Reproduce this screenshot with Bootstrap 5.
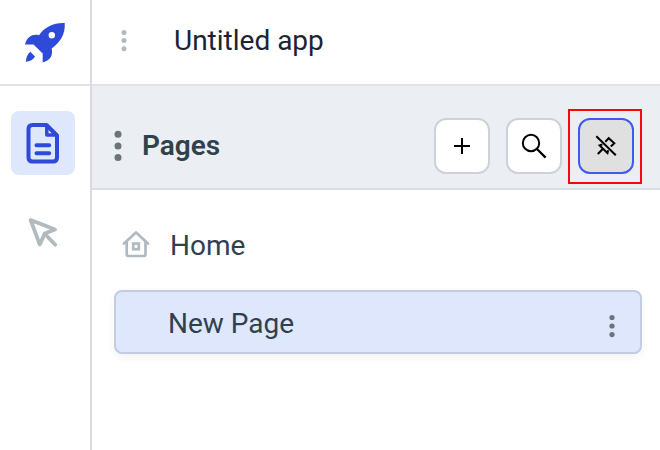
<!DOCTYPE html>
<html lang="en">
<head>
<meta charset="utf-8">
<meta name="viewport" content="width=device-width, initial-scale=1">
<title>Untitled app</title>
<link href="https://cdn.jsdelivr.net/npm/bootstrap@5.3.0/dist/css/bootstrap.min.css" rel="stylesheet">
<style>
body{font-family:Roboto,"Liberation Sans",sans-serif;font-size:28px;line-height:32px;color:#2f424c;background:#fff;overflow:hidden}
svg{display:block;flex:none}
.rail{width:92px;flex:none;border-right:2px solid #d8dadc}
.logo-cell,.topbar{height:86px;border-bottom:2px solid #dfe1e4}
.logo-cell{padding:2px 0 0 23px}
.rail-btn{width:64px;height:64px;margin-left:11px;border-radius:8px}
.rail-btn.on{background:#dfe7fd;margin-top:24.500px}
.rail-btn.off{margin-top:25.500px}
.topbar{padding:0 0 3px 28px;color:#1a2433}
.app-name{margin-left:46px}
.panel-head{height:104px;background:#ebeef2;border-bottom:2px solid #dbdee3;padding:32px 26px 14px 20px}
.panel-title{font-weight:600;margin-left:18px}
.tool{width:56px;height:56px;padding:0;border:2px solid #cdd1d8;border-radius:12px;background:#fff;color:#000}
.tool.on{background:#e0e0e0;border-color:#3e59f5}
.ring{position:absolute;inset:-9px -8px -10px -10px;border:2px solid #f8080c;pointer-events:none}
.page-row{height:64px;border:2px solid transparent;border-radius:8px;margin:0 18px 0 22px}
.page-row.on{background:#dfe7fd;border-color:#c2cce3;box-shadow:0 3px 8px rgba(40,50,60,.06)}
.home-row{margin-top:23px;margin-bottom:13px;padding-left:4px}
.home-row span{margin-left:19px;padding-top:2px}
.page-row.on span{margin-left:52px;padding-top:3px}
</style>
<script src="https://cdn.jsdelivr.net/npm/bootstrap@5.3.0/dist/js/bootstrap.bundle.min.js"></script>
</head>
<body>
<div class="d-flex vh-100">
  <nav class="rail d-flex flex-column">
    <div class="logo-cell d-flex align-items-center">
      <svg width="44" height="44" viewBox="24 21 44 44" fill="#2f49d8"><path fill-rule="evenodd" d="M65.700 23C55 22.500 45.500 27 40 35.200C33 33.700 28 37 26 44.500H34.500L43.700 53.500V62.500C51 60.500 54.300 55.500 52.700 48.500C61.500 42 66.500 34 65.700 23ZM52.800 32a3.200 3.200 0 1 0 0 6.400a3.200 3.200 0 1 0 0-6.400Z"/><path d="M31.300 51.800L36 56.500C34 60 31 61.500 26.800 61.700C27 57.500 28.500 54 31.300 51.800Z"/></svg>
    </div>
    <div class="rail-btn on d-flex align-items-center justify-content-center">
      <svg width="36" height="44" viewBox="25 120 36 44" fill="none" stroke="#2f49d8" stroke-width="4" stroke-linecap="round" stroke-linejoin="round"><path d="M32.500 124H46.500L57 134.500V156.500Q57 160.500 53 160.500H32.500Q28.500 160.500 28.500 156.500V128Q28.500 124 32.500 124Z"/><path d="M46.800 125V134H56" stroke-width="3.500"/><path d="M36.500 144.300H49.200M36.500 152.200H49.200"/></svg>
    </div>
    <div class="rail-btn off d-flex align-items-center justify-content-center">
      <svg width="34" height="34" viewBox="26 215 34 34" fill="none" stroke="#b1babf" stroke-width="3.800" stroke-linecap="round" stroke-linejoin="round"><path d="M30.600 220L55 229.600L44.800 233.600L39.700 244.400Z"/><path d="M45 234L55.200 244.700"/></svg>
    </div>
  </nav>
  <main class="flex-grow-1">
    <header class="topbar d-flex align-items-center">
      <svg width="8" height="24" viewBox="0 0 8 24" fill="#b3babf"><circle cx="4" cy="3.500" r="2.500"/><circle cx="4" cy="11.500" r="2.500"/><circle cx="4" cy="19.700" r="2.500"/></svg>
      <span class="app-name">Untitled app</span>
    </header>
    <section class="panel-head d-flex align-items-center">
      <svg width="12" height="32" viewBox="0 0 12 32" fill="#69757b"><circle cx="6" cy="4.300" r="3.500"/><circle cx="6" cy="16" r="3.500"/><circle cx="6" cy="27.500" r="3.500"/></svg>
      <span class="panel-title">Pages</span>
      <div class="d-flex gap-3 ms-auto">
        <button type="button" class="btn tool d-flex align-items-center justify-content-center" aria-label="Add page">
          <svg width="16" height="16" viewBox="0 0 16 16" stroke="#000" stroke-width="2"><path d="M8 0V16M0 8H16"/></svg>
        </button>
        <button type="button" class="btn tool d-flex align-items-center justify-content-center" aria-label="Search">
          <svg width="28" height="28" viewBox="520 132 28 28" fill="none" stroke="#000" stroke-width="2"><circle cx="531" cy="143" r="8.200"/><path d="M537 149L545.600 157.600" stroke-width="2.200"/></svg>
        </button>
        <div class="position-relative">
          <button type="button" class="btn tool on d-flex align-items-center justify-content-center" aria-label="Unpin">
            <svg width="24" height="24" viewBox="594 134 24 24" fill="none" stroke="#000" stroke-width="2"><path d="M596.300 136.300L615.800 155.300"/><path d="M605.300 141.800L608.700 138.200L614.300 143.300L610.800 146.500"/><path d="M602.400 144.400L599.600 145.400L607.500 153L608.200 150.300"/><path d="M602.700 149L597.800 154"/></svg>
          </button>
          <div class="ring"></div>
        </div>
      </div>
    </section>
    <div class="page-row home-row d-flex align-items-center">
      <svg width="31" height="30" viewBox="120 230 31 30" fill="none" stroke="#b1babf" stroke-width="2.700" stroke-linejoin="round" stroke-linecap="round"><path d="M124 243.500L136 232.400L148 243.500"/><path d="M126.700 242V254Q126.700 256 128.600 256H143.600Q145.500 256 145.500 254V242"/><rect x="133.200" y="243.600" width="5.600" height="5.600" stroke-linejoin="miter"/></svg>
      <span>Home</span>
    </div>
    <div class="page-row on d-flex align-items-center">
      <span>New Page</span>
      <svg class="ms-auto me-4 mt-2" width="8" height="24" viewBox="0 0 8 24" fill="#69757b"><circle cx="4" cy="3.500" r="2.600"/><circle cx="4" cy="12" r="2.600"/><circle cx="4" cy="20.600" r="2.600"/></svg>
    </div>
  </main>
</div>
</body>
</html>
